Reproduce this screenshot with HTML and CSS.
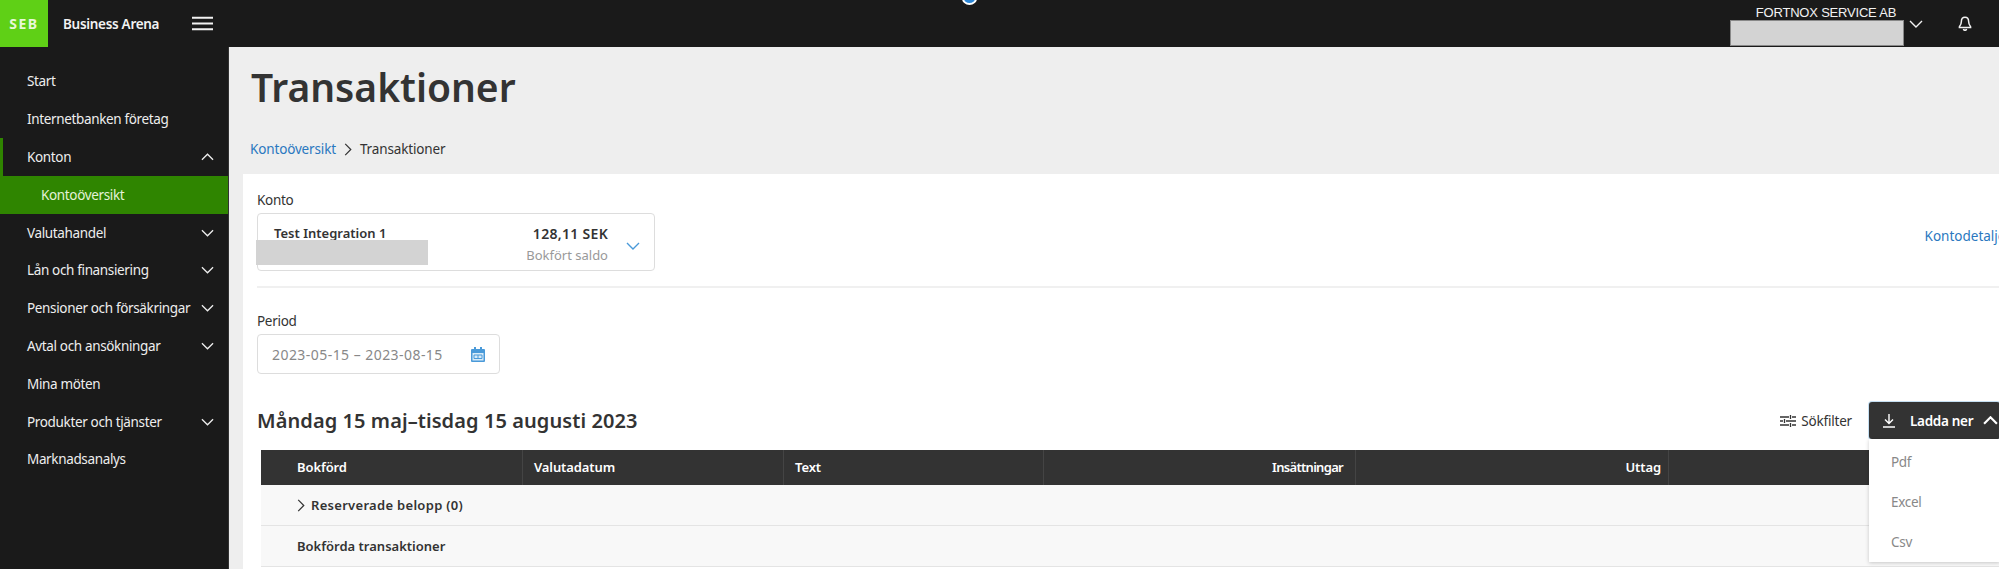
FILE: index.html
```html
<!DOCTYPE html>
<html lang="sv">
<head>
    <meta charset="UTF-8">
    <meta name="viewport" content="width=device-width, initial-scale=1.0">
    <title>Transaktioner</title>
    <link rel="stylesheet" href="styles.css">
</head>
<body>
<svg class="sprite" aria-hidden="true">
    <symbol id="chev-down" viewBox="0 0 14 8"><path d="M1 1l6 6 6-6" fill="none" stroke="currentColor" stroke-width="1.4"/></symbol>
    <symbol id="chev-up" viewBox="0 0 14 8"><path d="M1 7l6-6 6 6" fill="none" stroke="currentColor" stroke-width="1.4"/></symbol>
</svg>

<header class="topbar">
    <div class="logo">SEB</div>
    <div class="brand">Business Arena</div>
    <svg class="burger" viewBox="0 0 22 15"><path d="M0 1.5h22M0 7.5h22M0 13.5h22" stroke="currentColor" stroke-width="2"/></svg>
    <div class="upload-dot"></div>
    <div class="company">
        <span class="company-name">FORTNOX SERVICE AB</span>
        <span class="redacted company-redacted"></span>
    </div>
    <svg class="company-chev"><use href="#chev-down"/></svg>
    <svg class="bell" viewBox="0 0 14 15"><path d="M7 1.2c-2.4 0-3.6 1.9-3.6 4.1 0 2.9-.9 4.2-2 5.4v.8h11.2v-.8c-1.1-1.2-2-2.5-2-5.4C10.600 3.100 9.400 1.200 7 1.200zM5.400 13c.2.8.8 1.300 1.600 1.300s1.400-.5 1.600-1.300" fill="none" stroke="currentColor" stroke-width="1.500"/></svg>
</header>

<div class="main">
    <nav class="sidebar">
        <a class="nav-item">Start</a>
        <a class="nav-item">Internetbanken företag</a>
        <a class="nav-item nav-open">Konton<svg class="nav-chev"><use href="#chev-up"/></svg></a>
        <a class="nav-item nav-sub">Kontoöversikt</a>
        <a class="nav-item">Valutahandel<svg class="nav-chev"><use href="#chev-down"/></svg></a>
        <a class="nav-item">Lån och finansiering<svg class="nav-chev"><use href="#chev-down"/></svg></a>
        <a class="nav-item">Pensioner och försäkringar<svg class="nav-chev"><use href="#chev-down"/></svg></a>
        <a class="nav-item">Avtal och ansökningar<svg class="nav-chev"><use href="#chev-down"/></svg></a>
        <a class="nav-item">Mina möten</a>
        <a class="nav-item">Produkter och tjänster<svg class="nav-chev"><use href="#chev-down"/></svg></a>
        <a class="nav-item">Marknadsanalys</a>
    </nav>

    <main class="content">
        <h1>Transaktioner</h1>
        <div class="breadcrumb">
            <a class="link">Kontoöversikt</a>
            <svg class="crumb-chev" viewBox="0 0 8 14"><path d="M1 1l6 6-6 6" fill="none" stroke="currentColor" stroke-width="1.300"/></svg>
            <span>Transaktioner</span>
        </div>

        <section class="panel">
            <div class="account-row">
                <div>
                    <label class="field-label">Konto</label>
                    <div class="account-select">
                        <div class="account-name">Test Integration 1</div>
                        <div class="account-balance">
                            <strong>128,11 SEK</strong>
                            <span>Bokfört saldo</span>
                        </div>
                        <svg class="account-chev"><use href="#chev-down"/></svg>
                        <span class="redacted account-redacted"></span>
                    </div>
                </div>
                <a class="link details-link">Kontodetaljer</a>
            </div>

            <hr class="divider">

            <label class="field-label">Period</label>
            <div class="date-input">
                <span>2023-05-15 – 2023-08-15</span>
                <svg class="calendar" viewBox="0 0 14 15">
                    <path d="M3 0h2v2h4V0h2v2h2a1 1 0 0 1 1 1v11a1 1 0 0 1-1 1H1a1 1 0 0 1-1-1V3a1 1 0 0 1 1-1h2z" fill="#4a9ad9"/>
                    <path d="M1.500 6h11v7.500h-11z" fill="#d8ebf8"/>
                    <path d="M3 8h8v3.500H3z" fill="none" stroke="#4a9ad9"/>
                    <path d="M7 8v3.500" stroke="#4a9ad9"/>
                </svg>
            </div>

            <div class="results-head">
                <h2>Måndag 15 maj–tisdag 15 augusti 2023</h2>
                <div class="filter">
                    <svg class="filter-icon" viewBox="0 0 16 12"><path d="M0 2h9M12 2h4M0 6h3M6 6h10M0 10h9M12 10h4M10.500 0v4M4.500 4v4M10.500 8v4" fill="none" stroke="currentColor" stroke-width="1.300"/></svg>
                    Sökfilter
                </div>
                <div class="download">
                    <button class="download-btn" type="button">
                        <svg class="download-icon" viewBox="0 0 12 14"><path d="M6 0v9M2 5.500L6 9.500l4-4M0 13h12" fill="none" stroke="currentColor" stroke-width="1.400"/></svg>
                        Ladda ner
                        <svg class="download-chev" viewBox="0 0 14 8"><path d="M1 7l6-6 6 6" fill="none" stroke="currentColor" stroke-width="2"/></svg>
                    </button>
                    <ul class="download-menu">
                        <li>Pdf</li>
                        <li>Excel</li>
                        <li>Csv</li>
                    </ul>
                </div>
            </div>

            <div class="table">
                <div class="table-head">
                    <div class="th">Bokförd</div>
                    <div class="th">Valutadatum</div>
                    <div class="th">Text</div>
                    <div class="th th-right th-narrow">Insättningar</div>
                    <div class="th th-right">Uttag</div>
                    <div class="th"></div>
                </div>
                <div class="table-row row-reserved">
                    <svg class="row-chev" viewBox="0 0 8 14"><path d="M1 1l6 6-6 6" fill="none" stroke="currentColor" stroke-width="1.300"/></svg>
                    Reserverade belopp (0)
                </div>
                <div class="table-row">Bokförda transaktioner</div>
            </div>
        </section>
    </main>
</div>
</body>
</html>
```

FILE: styles.css
```css
* {
    box-sizing: border-box;
}

html, body {
    height: 569px;
}

body {
    margin: 0;
    overflow: hidden;
    font-family: "Noto Sans", Arial, sans-serif;
    font-size: 13.5px;
    letter-spacing: -0.3px;
    white-space: nowrap;
    color: #333;
    background-color: #1a1a1a;
}

.sprite {
    display: none;
}

.topbar {
    display: flex;
    align-items: center;
    position: relative;
    height: 47px;
    color: #f2f2f2;
    background-color: #1a1a1a;
}

.logo {
    display: flex;
    align-items: center;
    justify-content: center;
    width: 48px;
    height: 47px;
    font-weight: 700;
    font-size: 14px;
    letter-spacing: 1.500px;
    color: #e8f8d8;
    background-color: #5fd016;
}

.brand {
    margin-left: 15px;
    font-weight: 600;
}

.burger {
    width: 21px;
    height: 15px;
    margin-left: 33px;
}

.upload-dot {
    position: absolute;
    left: 962px;
    top: -8px;
    width: 15px;
    height: 13px;
    border-radius: 50%;
    border: 2px solid #fff;
    background-color: #2b86d6;
}

.company {
    position: relative;
    display: flex;
    justify-content: center;
    width: 174px;
    height: 45px;
    margin-left: auto;
    padding: 4px 0 0 18px;
    font-family: "Liberation Sans", Arial, sans-serif;
    font-size: 13px;
    letter-spacing: -0.2px;
}

.redacted {
    position: absolute;
    background-color: #d3d3d3;
}

.company-redacted {
    left: 0;
    top: 19px;
    width: 174px;
    height: 26px;
    border: 1px solid #888;
}

.company-chev {
    width: 14px;
    height: 8px;
    margin-left: 5px;
}

.bell {
    width: 14px;
    height: 15px;
    margin-left: 35px;
    margin-right: 27px;
}

.main {
    display: flex;
    height: 522px;
}

.sidebar {
    flex: 0 0 229px;
    padding-top: 15.5px;
    letter-spacing: -0.35px;
    color: #eee;
    background-color: #1a1a1a;
    border-right: 1px solid #333;
}

.nav-item {
    display: flex;
    align-items: center;
    justify-content: space-between;
    height: 37.8px;
    padding: 0 14px 0 27px;
}

.nav-open {
    border-left: 3px solid #2f8500;
    padding-left: 24px;
}

.nav-sub {
    padding-left: 41px;
    color: #e4f2d8;
    background-color: #2f8500;
}

.nav-chev {
    width: 13px;
    height: 8px;
}

.content {
    flex: 1;
    min-width: 0;
    background-color: #eee;
}

h1 {
    margin: 0;
    padding: 15px 0 0 22px;
    font-size: 39px;
    line-height: 50px;
    font-weight: 600;
    letter-spacing: 0;
}

.breadcrumb {
    display: flex;
    align-items: center;
    height: 20px;
    margin-top: 27px;
    padding-left: 21px;
    letter-spacing: -0.15px;
}

.link {
    color: #2a78c0;
}

.crumb-chev {
    width: 8px;
    height: 13px;
    margin: 0 8px;
}

.panel {
    width: 1830px;
    height: 395px;
    margin: 15px 0 0 14px;
    padding: 17px 15px 0 14px;
    background-color: #fff;
}

.account-row {
    display: flex;
    justify-content: space-between;
    width: 1754px;
}

.field-label {
    display: block;
    height: 22px;
    line-height: 18px;
}

.account-select {
    position: relative;
    display: flex;
    width: 398px;
    height: 58px;
    padding: 10px 0 0 16px;
    border: 1px solid #ddd;
    border-radius: 4px;
    letter-spacing: 0;
}

.account-name {
    flex: 1;
    font-weight: 600;
    font-size: 13px;
}

.account-balance {
    display: flex;
    flex-direction: column;
    align-items: flex-end;
    gap: 3px;
    font-size: 13px;
}

.account-balance strong {
    font-size: 14px;
    font-weight: 600;
    letter-spacing: 0.3px;
}

.account-balance span {
    color: #999;
}

.account-chev {
    width: 14px;
    height: 8px;
    margin: 18px 14px 0 18px;
    color: #4a9ad9;
}

.account-redacted {
    left: -2px;
    top: 26px;
    width: 172px;
    height: 25px;
}

.details-link {
    align-self: flex-start;
    margin-top: 36px;
    letter-spacing: 0;
}

.divider {
    height: 2px;
    margin: 15px 0 24px;
    border: 0;
    background-color: #f0f0f0;
}

.date-input {
    display: flex;
    align-items: center;
    justify-content: space-between;
    width: 243px;
    height: 40px;
    padding: 0 14px;
    font-size: 14px;
    letter-spacing: 0.45px;
    color: #888;
    border: 1px solid #ddd;
    border-radius: 4px;
}

.calendar {
    width: 14px;
    height: 15px;
}

.results-head {
    display: flex;
    align-items: center;
    width: 1743px;
    height: 37px;
    margin-top: 28px;
}

h2 {
    flex: 1;
    margin: 0;
    font-size: 20px;
    font-weight: 600;
    letter-spacing: 0.08px;
}

.filter {
    display: flex;
    align-items: center;
    gap: 5px;
    margin-right: 17px;
    letter-spacing: -0.2px;
}

.filter-icon {
    width: 16px;
    height: 12px;
}

.download {
    position: relative;
    width: 131px;
}

.download-btn {
    display: flex;
    align-items: center;
    width: 100%;
    height: 37px;
    padding: 0 0 0 14px;
    font: inherit;
    font-weight: 600;
    letter-spacing: inherit;
    color: #fff;
    background-color: #333;
    border: 0;
    border-radius: 3px;
    box-shadow: 0 0 0 1px #c5dff2;
}

.download-icon {
    width: 12px;
    height: 14px;
    margin-right: 15px;
}

.download-chev {
    width: 15px;
    height: 9px;
    margin-left: 10px;
}

.download-menu {
    position: absolute;
    top: 37px;
    left: 0;
    z-index: 2;
    width: 131px;
    margin: 0;
    padding: 3px 0 0;
    list-style: none;
    color: #888;
    background-color: #fff;
    box-shadow: 0 1px 4px rgba(0, 0, 0, 0.2);
}

.download-menu li {
    height: 40px;
    line-height: 40px;
    padding-left: 22px;
}

.table {
    width: 1830px;
    margin: 11px 0 0 4px;
}

.table-head {
    display: grid;
    grid-template-columns: 261px 261px 260px 312px 313px 1fr;
    height: 35px;
    font-size: 13px;
    font-weight: 600;
    letter-spacing: -0.1px;
    color: #fff;
    background-color: #333;
}

.th {
    padding: 0 7px 0 11px;
    line-height: 34px;
    border-left: 1px solid #444;
}

.th:first-child {
    padding-left: 36px;
    border-left: 0;
}

.th-right {
    text-align: right;
}

.th-narrow {
    padding-right: 12px;
    letter-spacing: -0.7px;
}

.table-row {
    display: flex;
    align-items: center;
    height: 41px;
    padding-left: 36px;
    font-size: 13px;
    font-weight: 600;
    letter-spacing: 0;
    background-color: #f8f8f8;
    border-bottom: 1px solid #e4e4e4;
}

.row-reserved {
    letter-spacing: 0.3px;
}

.row-chev {
    width: 8px;
    height: 13px;
    margin-right: 6px;
}
```
